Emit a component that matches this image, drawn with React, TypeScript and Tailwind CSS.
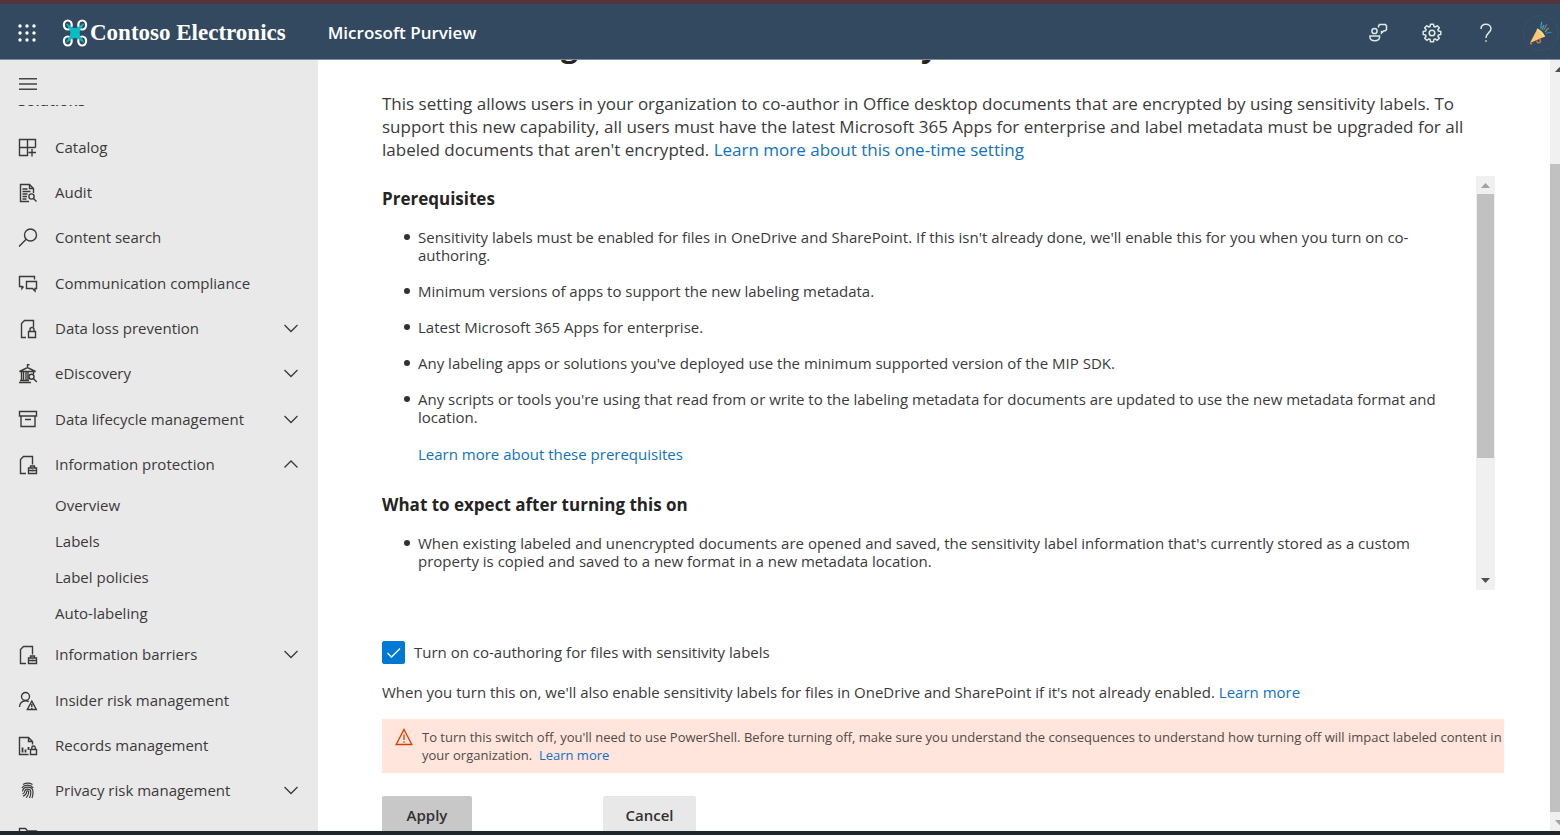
import React, { useState } from "react";

type IconName =
  | "catalog"
  | "audit"
  | "search"
  | "chat"
  | "fileLock"
  | "court"
  | "archive"
  | "fileCase"
  | "personRisk"
  | "records"
  | "fingerprint"
  | "folder";

const iconShapes: Record<IconName, React.ReactNode> = {
  catalog: (
    <path d="M17.500 9.500v-8h-16v16h8v-16M1.500 9.500h16M14 11v7.500M10.500 14.500h7.500" />
  ),
  audit: (
    <>
      <path d="M11 18.500H2.500V1.500h9l4 4v4.500M11.500 1.500v4h4" />
      <path d="M4.500 6h5M4.500 8.500h8M4.500 11h5M4.500 13.500h4.500M4.500 16h4" />
      <circle cx="13.500" cy="13.500" r="2.600" />
      <path d="M15.500 15.500l3 3" />
    </>
  ),
  search: (
    <>
      <circle cx="12.500" cy="7" r="6" />
      <path d="M8.200 11.300L1 18.500" />
    </>
  ),
  chat: (
    <>
      <path d="M5.500 12.500l-1.500 2v-2H1.500v-10h15v3" />
      <path d="M8.500 7.500h10v7h-1.500v2.500l-2.500-2.500h-6z" />
    </>
  ),
  fileLock: (
    <>
      <path d="M8 18.500H3.500V4.500l3-3h9v6.500" />
      <path d="M10.500 12.500h7v6h-7zM12 12.500v-2a2 2 0 0 1 4 0v2" />
    </>
  ),
  court: (
    <>
      <path d="M1.500 7.500L9.500 3.500l8 4zM9.500 3.500V.8h2" />
      <path d="M3.500 8v8M5.500 8v8M8 8v8M10 8v8M15.500 8v2M2 16.500h9M1 18.500h12" />
      <circle cx="13.500" cy="12.800" r="2.500" />
      <path d="M15.300 14.600l3.500 3.500" />
    </>
  ),
  archive: (
    <path d="M1.500 1.500h17v4.500h-17zM3 6v10.500h14V6M7 9.500h6" />
  ),
  fileCase: (
    <>
      <path d="M8 18.500H2.500V4.500l3-3h9v8" />
      <path d="M10.500 13h8v5.500h-8zM12.500 13v-2h4v2M10.500 15.500h8M14.500 14.500v2" />
    </>
  ),
  personRisk: (
    <>
      <circle cx="7.500" cy="5.500" r="4" />
      <path d="M1.500 16c0-3.800 2.600-6.300 6-6.300 1.300 0 2.400.3 3.300.9" />
      <path d="M13.800 10.200l4.500 8.300H9.300zM13.800 13v3M13.800 16.800v1" />
    </>
  ),
  records: (
    <>
      <path d="M10.500 18.500H1.500V1.500h9l4 4v3M10.500 1.500v4h4" />
      <path d="M4.500 11.500v5M7.500 13.500v3M10.500 11v3" strokeWidth="1.800" />
      <path d="M12.500 13.500h6v5h-6zM13.800 13.500v-1.800a1.700 1.700 0 0 1 3.400 0v1.800" />
    </>
  ),
  fingerprint: (
    <path
      strokeWidth="1.200"
      d="M5 3.500c3-1.700 6.500-1.700 9.500 0M3.800 6.800c3-3.500 8.500-3.500 11.500 0M4.500 10.500c.5-5.500 10-6 10.500 0 .1 2.500-.2 4.500-1 6.500M4.500 13c1.500-.5 2-1.200 2.200-2.500.4-3.200 5.800-3.200 6.100.2.100 2.300-.3 4.300-1.300 6.300M5 15.200c2-.8 3.500-2 3.700-4.500.1-1.200 2-1.200 2 .1 0 2.500-.8 4.500-2.500 6"
    />
  ),
  folder: <path d="M1.500 18V1.500h6l2 2.500h9V18zM1.500 6h6l2-2" />,
};

function Icon({ name }: { name: IconName }) {
  return (
    <svg
      aria-hidden="true"
      className="size-5 shrink-0 text-[#3b3a39]"
      viewBox="0 0 20 20"
      fill="none"
      stroke="currentColor"
      strokeWidth="1.400"
    >
      {iconShapes[name]}
    </svg>
  );
}

function Chevron({ up }: { up?: boolean }) {
  return (
    <svg
      aria-hidden="true"
      className="h-2.5 w-3.5 shrink-0"
      viewBox="0 0 14 10"
      fill="none"
      stroke="#3b3a39"
      strokeWidth="1.300"
    >
      <path d={up ? "M.5 7.500L7 1 13.500 7.500" : "M.5 1L7 7.500l6.500-6.500"} />
    </svg>
  );
}

type NavItem = {
  label: string;
  icon: IconName;
  expandable?: boolean;
  children?: string[];
};

const navGroups: NavItem[][] = [
  [
    { label: "Catalog", icon: "catalog" },
    { label: "Audit", icon: "audit" },
    { label: "Content search", icon: "search" },
  ],
  [
    { label: "Communication compliance", icon: "chat" },
    { label: "Data loss prevention", icon: "fileLock", expandable: true },
    { label: "eDiscovery", icon: "court", expandable: true },
  ],
  [
    { label: "Data lifecycle management", icon: "archive", expandable: true },
    {
      label: "Information protection",
      icon: "fileCase",
      expandable: true,
      children: ["Overview", "Labels", "Label policies", "Auto-labeling"],
    },
  ],
  [{ label: "Information barriers", icon: "fileCase", expandable: true }],
  [
    { label: "Insider risk management", icon: "personRisk" },
    { label: "Records management", icon: "records" },
    { label: "Privacy risk management", icon: "fingerprint", expandable: true },
  ],
  [{ label: "Subject rights requests", icon: "folder" }],
];

function NavRow({ item }: { item: NavItem }) {
  const inner = (
    <>
      <Icon name={item.icon} />
      <span className="flex-1 text-left">{item.label}</span>
      {item.expandable && <Chevron up={!!item.children} />}
    </>
  );
  const cls = "flex h-[45px] w-full items-center gap-[17px] pr-5 pl-[18px]";
  return (
    <li>
      {item.expandable ? (
        <button type="button" aria-expanded={!!item.children} className={cls}>
          {inner}
        </button>
      ) : (
        <a href="#" className={cls}>
          {inner}
        </a>
      )}
      {item.children && (
        <ul>
          {item.children.map((child) => (
            <li key={child}>
              <a href="#" className="flex h-9 items-center pl-[55px]">
                {child}
              </a>
            </li>
          ))}
        </ul>
      )}
    </li>
  );
}

function ContosoMark() {
  return (
    <svg aria-hidden="true" className="h-7 w-[26px] shrink-0" viewBox="0 0 26 28">
      <g fill="none" stroke="#fff" strokeWidth="2.200">
        <ellipse cx="5.800" cy="6" rx="3.900" ry="4.500" />
        <ellipse cx="20.200" cy="6" rx="3.900" ry="4.500" />
        <ellipse cx="5.800" cy="22" rx="3.900" ry="4.500" />
        <ellipse cx="20.200" cy="22" rx="3.900" ry="4.500" />
      </g>
      <path
        d="M4.800 5.200L10.300 9Q13 10.200 15.700 9L21.200 5.200 17.500 11Q16.500 14 17.500 17L21.200 22.800 15.700 19Q13 17.800 10.300 19L4.800 22.800 8.500 17Q9.500 14 8.500 11z"
        fill="#0bbcc4"
        stroke="#0bbcc4"
        strokeWidth="1.200"
        strokeLinejoin="round"
      />
    </svg>
  );
}

function Header() {
  return (
    <header className="flex h-14 shrink-0 items-center border-b border-[#7d8e9e] bg-[#32495f] pt-0.5 text-white">
      <button type="button" aria-label="App launcher" className="ml-[18px]">
        <svg className="size-[18px]" viewBox="0 0 18 18" fill="#fff">
          {[2, 9, 16].map((y) =>
            [2, 9, 16].map((x) => <circle key={`${x}-${y}`} cx={x} cy={y} r="1.700" />),
          )}
        </svg>
      </button>
      <a href="#" className="ml-[26px] flex items-center gap-0.5">
        <ContosoMark />
        <span className="pt-0.5 font-['Liberation_Serif',serif] text-[23px] font-bold whitespace-nowrap">
          Contoso Electronics
        </span>
      </a>
      <a href="#" className="ml-[42px] text-[17px] font-semibold whitespace-nowrap">
        Microsoft Purview
      </a>
      <div className="ml-auto flex items-center">
        <button type="button" aria-label="Feedback" className="mr-[34px]">
          <svg className="size-5" viewBox="0 0 20 20" fill="none" stroke="#dfe9e6" strokeWidth="1.500">
            <circle cx="6.500" cy="8" r="2.600" />
            <path d="M2 13h9.500v1.300c0 2-2 3.400-4.700 3.400S2 16.300 2 14.300z" />
            <path d="M10.500 4.500V3l1-1.500h6l1 1.500v3.500l-1 1.200h-1.500l-2.500 2.300V7.700" />
          </svg>
        </button>
        <button type="button" aria-label="Settings" className="mr-[34px]">
          <svg className="size-5" viewBox="0 0 20 20" fill="none" stroke="#dfe9e6" strokeWidth="1.500">
            <path
              strokeLinejoin="round"
              d="M8.500 1.200h3l.4 2.300 1.300.6 2-1.400 2.100 2.100-1.400 2 .6 1.300 2.300.4v3l-2.300.4-.6 1.300 1.400 2-2.100 2.100-2-1.400-1.300.6-.4 2.300h-3l-.4-2.300-1.300-.6-2 1.400-2.100-2.100 1.400-2-.6-1.300-2.300-.4v-3l2.300-.4.6-1.300-1.400-2 2.100-2.100 2 1.400 1.300-.6z"
            />
            <circle cx="10" cy="10" r="2.800" />
          </svg>
        </button>
        <button type="button" aria-label="Help" className="mr-[27px]">
          <svg className="h-5 w-5" viewBox="0 0 20 20" fill="none" stroke="#dfe9e6" strokeWidth="1.500">
            <path d="M5 6c0-3 2.200-4.800 5-4.800S15 3 15 5.800c0 3.700-5 4.200-5 9.200" />
            <circle cx="10" cy="18" r=".6" fill="#dfe9e6" strokeWidth=".6" />
          </svg>
        </button>
        <button
          type="button"
          aria-label="Account"
          className="mr-px flex size-9 items-center justify-center rounded-full border border-[#3b5168]"
        >
          <svg className="size-6" viewBox="0 0 24 24">
            <path d="M1 22L8.500 7.500c3 1.500 6 4.500 7.500 8z" fill="#f8ca72" />
            <path d="M8.500 7.500c3 1.500 6 4.500 7.500 8l-1.500.8C13 13 11 10.500 7.700 9z" fill="#fbd98d" />
            <path
              d="M7.500 19.500c.5 3 3.800 3 4 .5l-.8-2.500M1 22l2 1"
              fill="none"
              stroke="#d9704a"
              strokeWidth="1.500"
            />
            <g fill="none" strokeWidth="1.200">
              <path d="M11.500 7.500c1.500-1.500-.5-3 1.500-6.500M13 8.500L15 4" stroke="#31b4b0" />
              <path d="M14.500 9c2-1.500 1-3.500 3.500-5.500" stroke="#b55bb5" />
              <path d="M16 11c1.500-1 1.500-3 4-4" stroke="#6fae4a" />
              <path d="M17 13c1.500-2 3-1.500 5.500-1.500" stroke="#2c83c9" />
            </g>
          </svg>
        </button>
      </div>
    </header>
  );
}

function Sidebar() {
  return (
    <aside className="flex w-[318px] shrink-0 flex-col overflow-hidden bg-[#e9e9e9] text-[15px] text-[#3b3a39]">
      <div className="flex h-[45px] shrink-0 items-center pt-[3px] pl-[19px]">
        <button type="button" aria-label="Collapse navigation">
          <svg className="h-3 w-[18px]" viewBox="0 0 18 12" stroke="#444" strokeWidth="1.400">
            <path d="M0 .8h18M0 6h18M0 11.200h18" />
          </svg>
        </button>
      </div>
      <nav aria-label="Solutions" className="flex min-h-0 flex-1 flex-col overflow-hidden">
        <h2 className="-mt-4 mb-3.5 h-[22px] shrink-0 pl-[18px] font-semibold">Solutions</h2>
        <div className="flex flex-col gap-px">
          {navGroups.map((group) => (
            <ul key={group[0].label}>
              {group.map((item) => (
                <NavRow key={item.label} item={item} />
              ))}
            </ul>
          ))}
        </div>
      </nav>
    </aside>
  );
}

function Triangle({ down, color }: { down?: boolean; color: string }) {
  return (
    <svg aria-hidden="true" className="h-[5px] w-[9px] shrink-0" viewBox="0 0 9 5" fill={color}>
      <path d={down ? "M0 0h9L4.500 5z" : "M0 5h9L4.500 0z"} />
    </svg>
  );
}

function Link({ children }: { children: React.ReactNode }) {
  return (
    <a href="#" className="text-[#1072c4] hover:underline">
      {children}
    </a>
  );
}

const prerequisites = [
  "Sensitivity labels must be enabled for files in OneDrive and SharePoint. If this isn't already done, we'll enable this for you when you turn on co-authoring.",
  "Minimum versions of apps to support the new labeling metadata.",
  "Latest Microsoft 365 Apps for enterprise.",
  "Any labeling apps or solutions you've deployed use the minimum supported version of the MIP SDK.",
  "Any scripts or tools you're using that read from or write to the labeling metadata for documents are updated to use the new metadata format and location.",
];

const expectations = [
  "When existing labeled and unencrypted documents are opened and saved, the sensitivity label information that's currently stored as a custom property is copied and saved to a new format in a new metadata location.",
];

function BulletList({ items }: { items: string[] }) {
  return (
    <ul className="flex flex-col gap-[18px]">
      {items.map((text) => (
        <li key={text} className="flex gap-2">
          <span className="mt-1.5 size-1.5 shrink-0 rounded-full bg-[#323130]" />
          <span>{text}</span>
        </li>
      ))}
    </ul>
  );
}

function Details() {
  return (
    <section className="mr-[9px] flex h-[414px]">
      <div className="flex-1 overflow-hidden pt-[11px] pr-8 text-[15px] leading-[18px]">
        <h2 className="text-[17px] leading-6 font-bold text-[#252423]">Prerequisites</h2>
        <div className="mt-[17px] pl-[22px]">
          <BulletList items={prerequisites} />
          <p className="mt-[19px] pl-3.5">
            <Link>Learn more about these prerequisites</Link>
          </p>
        </div>
        <h2 className="mt-[30px] text-[17px] leading-6 font-bold text-[#252423]">
          What to expect after turning this on
        </h2>
        <div className="mt-[17px] pl-[22px]">
          <BulletList items={expectations} />
        </div>
      </div>
      <div className="flex w-[19px] flex-col items-center bg-[#f0f0f0] py-[7px]">
        <Triangle color="#a3a3a3" />
        <div className="mt-1.5 h-[264px] w-[17px] bg-[#c1c1c1]" />
        <div className="mt-auto">
          <Triangle down color="#505050" />
        </div>
      </div>
    </section>
  );
}

export default function App() {
  const [enabled, setEnabled] = useState(true);
  return (
    <div className="flex h-screen flex-col overflow-hidden border-t-4 border-b-4 border-t-[#55333a] border-b-[#1e272e] bg-white font-['Open_Sans','Noto_Sans',sans-serif] text-[#3b3a39]">
      <Header />
      <div className="flex min-h-0 flex-1">
        <Sidebar />
        <main className="min-w-0 flex-1 overflow-hidden pr-[46px] pl-16">
          <h1 className="-mt-8 text-[30px] leading-9 font-bold whitespace-nowrap text-[#252423]">
            Co-authoring for files with sensitivity labels
          </h1>
          <p className="mt-7 pr-6 text-[17px] leading-[23px]">
            This setting allows users in your organization to co-author in Office desktop documents
            that are encrypted by using sensitivity labels. To support this new capability, all
            users must have the latest Microsoft 365 Apps for enterprise and label metadata must be
            upgraded for all labeled documents that aren't encrypted.{" "}
            <Link>Learn more about this one-time setting</Link>
          </p>
          <div className="mt-[15px]">
            <Details />
          </div>
          <label className="mt-[51px] flex w-fit items-center gap-[9px] text-[15px]">
            <span className="grid">
              <input
                type="checkbox"
                checked={enabled}
                onChange={(e) => setEnabled(e.target.checked)}
                className="peer col-start-1 row-start-1 size-[23px] appearance-none rounded-xs border border-[#323130] checked:border-[#0078d4] checked:bg-[#0078d4]"
              />
              <svg
                aria-hidden="true"
                className="pointer-events-none invisible col-start-1 row-start-1 size-[23px] peer-checked:visible"
                viewBox="0 0 23 23"
                fill="none"
                stroke="#fff"
                strokeWidth="1.300"
              >
                <path d="M5.500 12l4 4 8.500-8.500" />
              </svg>
            </span>
            Turn on co-authoring for files with sensitivity labels
          </label>
          <p className="mt-[18px] text-[15px] leading-5">
            When you turn this on, we'll also enable sensitivity labels for files in OneDrive and
            SharePoint if it's not already enabled. <Link>Learn more</Link>
          </p>
          <div
            role="alert"
            className="mt-[17px] flex gap-[9px] bg-[#ffe5dc] py-[9px] pl-[13px] text-[13px] leading-[18px] text-[#514a47]"
          >
            <svg
              aria-hidden="true"
              className="h-[18px] w-[18px] shrink-0"
              viewBox="0 0 18 18"
              fill="none"
              stroke="#d83b01"
              strokeWidth="1.300"
            >
              <path d="M9 1.500l7.800 15H1.200zM9 6.500v5.500M9 13.200v1.500" />
            </svg>
            <p>
              To turn this switch off, you'll need to use PowerShell. Before turning off, make sure
              you understand the consequences to understand how turning off will impact labeled
              content in your organization.&nbsp; <Link>Learn more</Link>
            </p>
          </div>
          <div className="mt-[23px] flex text-[15px] font-semibold text-[#323130]">
            <button type="button" className="h-[38px] w-[90px] rounded-xs bg-[#c8c8c8]">
              Apply
            </button>
            <button type="button" className="ml-[131px] h-[38px] w-[93px] rounded-xs bg-[#e8e8e8]">
              Cancel
            </button>
          </div>
        </main>
        <div className="flex w-2.5 shrink-0 flex-col items-start overflow-hidden bg-[#f0f0f0] pt-[7px] pb-1.5">
          <div className="pl-[5px]">
            <Triangle color="#505050" />
          </div>
          <div className="mt-[92px] mb-2 w-full flex-1 bg-[#c1c1c1]" />
          <div className="pl-[5px]">
            <Triangle down color="#a3a3a3" />
          </div>
        </div>
      </div>
    </div>
  );
}
